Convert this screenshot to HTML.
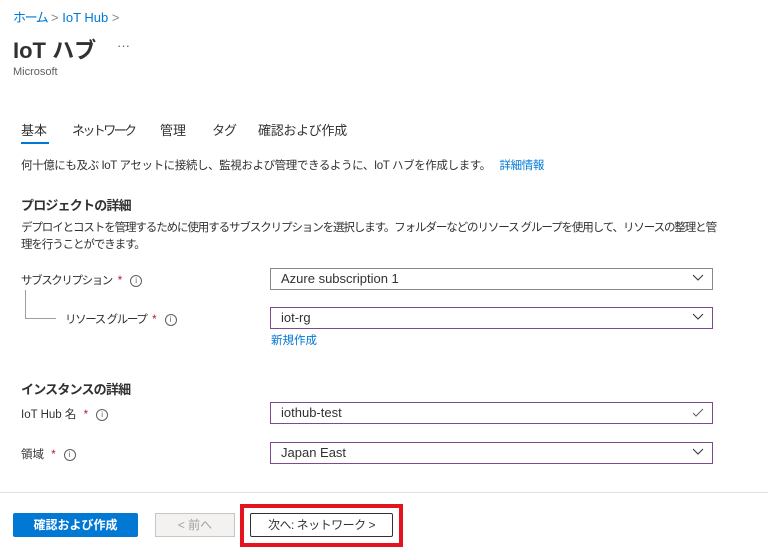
<!DOCTYPE html><html><head><meta charset="utf-8"><style>
body{margin:0;width:768px;height:560px;background:#fff;position:relative;overflow:hidden;font-family:"Liberation Sans","Noto Sans CJK JP",sans-serif;color:#323130}
.a{position:absolute;white-space:nowrap}
.s{font-size:11.5px}
.k{letter-spacing:-1.4px}
.b{font-size:13px}
.in{position:absolute;left:270px;width:443px;height:22px;border:1px solid #8a8886;box-sizing:border-box;font-size:13px;line-height:20px;padding-left:10px}
.p{border-color:#7b4a8f}
.ch{position:absolute;right:8px;top:5px}
.req{color:#a4262c;letter-spacing:0;margin-left:4px}
.i{display:inline-block;width:10px;height:10px;border:1px solid #605e5c;border-radius:50%;font-size:8px;line-height:10px;text-align:center;margin-left:8px;vertical-align:1px;color:#605e5c;letter-spacing:0}
</style></head><body>
<div class="a" style="left:13px;top:7px;color:#0078d4;font-size:13px"><span class="k">ホーム</span> <span style="color:#8a8886">&gt;</span> IoT Hub <span style="color:#8a8886">&gt;</span></div>
<div class="a" style="left:13px;top:33px;font-size:22px;font-weight:bold;color:#323130">IoT ハブ</div>
<div class="a" style="left:117px;top:38px;font-size:13px;color:#605e5c">···</div>
<div class="a" style="left:13px;top:66px;font-size:11px;color:#605e5c">Microsoft</div>
<div class="a b" style="left:21px;top:120px">基本</div>
<div class="a" style="left:21px;top:142px;width:28px;height:2px;background:#0078d4"></div>
<div class="a b k" style="left:72px;top:120px;letter-spacing:-2.6px">ネットワーク</div>
<div class="a b" style="left:160px;top:120px">管理</div>
<div class="a b k" style="left:212px;top:120px;letter-spacing:-1px">タグ</div>
<div class="a b" style="left:258px;top:120px;letter-spacing:-0.3px">確認および作成</div>
<div class="a s" style="left:21px;top:157px;letter-spacing:-0.4px">何十億にも及ぶ IoT アセットに接続し、監視および管理できるように、IoT ハブを作成します。 <span style="color:#0078d4;margin-left:6px">詳細情報</span></div>
<div class="a b" style="left:21px;top:195px;font-weight:bold;letter-spacing:-0.8px">プロジェクトの詳細</div>
<div class="a s" style="left:21px;top:220px;line-height:17px;letter-spacing:-1.1px">デプロイとコストを管理するために使用するサブスクリプションを選択します。フォルダーなどのリソース グループを使用して、リソースの整理と管<br>理を行うことができます。</div>
<div class="a s k" style="left:21px;top:272px">サブスクリプション <span class="req">*</span><span class="i">i</span></div>
<div class="a" style="left:25px;top:290px;width:1px;height:28px;background:#a19f9d"></div>
<div class="a" style="left:25px;top:318px;width:31px;height:1px;background:#a19f9d"></div>
<div class="a s k" style="left:65px;top:311px">リソース グループ <span class="req">*</span><span class="i">i</span></div>
<div class="in" style="top:268px">Azure subscription 1<svg class="ch" width="12" height="8"><path d="M1 1l5 5 5-5" fill="none" stroke="#323130"/></svg></div>
<div class="in p" style="top:307px">iot-rg<svg class="ch" width="12" height="8"><path d="M1 1l5 5 5-5" fill="none" stroke="#323130"/></svg></div>
<div class="a s" style="left:271px;top:332px;color:#0078d4">新規作成</div>
<div class="a b" style="left:21px;top:379px;font-weight:bold;letter-spacing:-0.8px">インスタンスの詳細</div>
<div class="a s" style="left:21px;top:406px">IoT Hub 名 <span class="req">*</span><span class="i">i</span></div>
<div class="in p" style="top:402px">iothub-test<svg class="ch" width="12" height="9"><path d="M1 5l3 3 7-7" fill="none" stroke="#605e5c"/></svg></div>
<div class="a s" style="left:21px;top:446px">領域 <span class="req">*</span><span class="i">i</span></div>
<div class="in p" style="top:442px">Japan East<svg class="ch" width="12" height="8"><path d="M1 1l5 5 5-5" fill="none" stroke="#323130"/></svg></div>
<div class="a" style="left:0;top:492px;width:768px;height:1px;background:#e1dfdd"></div>
<div class="a" style="left:13px;top:513px;width:125px;height:24px;background:#0078d4;border-radius:2px;color:#fff;font-size:12px;font-weight:bold;text-align:center;line-height:24px">確認および作成</div>
<div class="a" style="left:155px;top:513px;width:80px;height:24px;box-sizing:border-box;border:1px solid #c8c6c4;background:#f3f2f1;color:#a19f9d;font-size:12px;text-align:center;line-height:22px">&lt; 前へ</div>
<div class="a" style="left:240px;top:504px;width:163px;height:43px;box-sizing:border-box;border:4px solid #e3141e"></div>
<div class="a" style="left:250px;top:513px;width:143px;height:24px;box-sizing:border-box;border:1px solid #323130;border-radius:2px;font-size:12px;text-align:center;line-height:22px;letter-spacing:-0.5px">次へ: ネットワーク &gt;</div>
</body></html>
